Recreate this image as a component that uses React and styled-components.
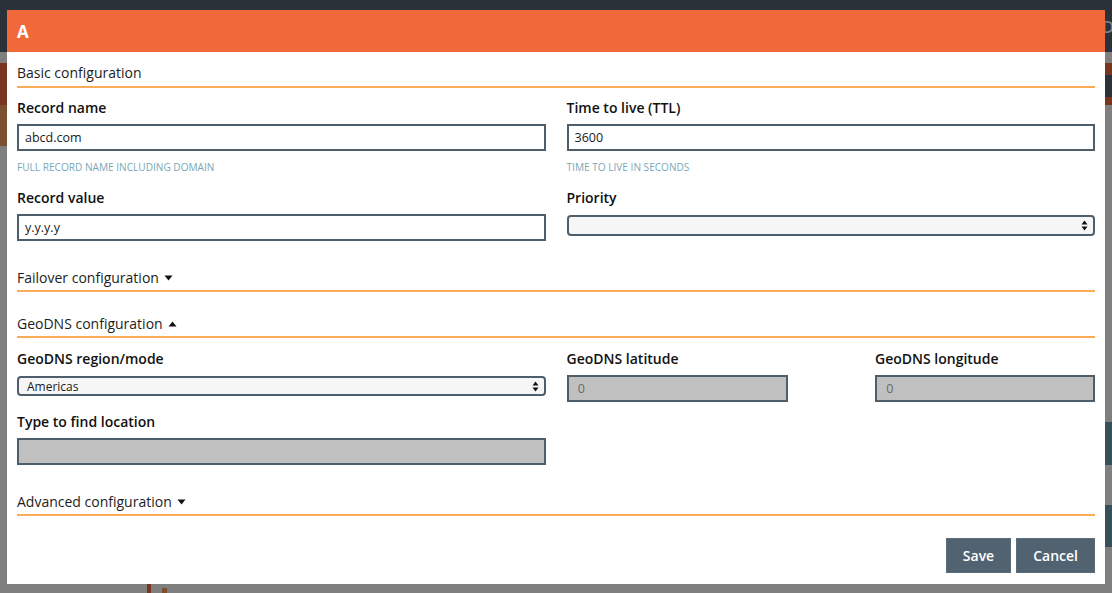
import React from "react";
import styled, { createGlobalStyle } from "styled-components";

const Global = createGlobalStyle`
  html, body { margin: 0; padding: 0; }
  body { font-family: "Open Sans", "Liberation Sans", sans-serif; }
  * { box-sizing: border-box; }
`;

const Screen = styled.div`
  position: relative;
  width: 1112px;
  height: 593px;
  overflow: hidden;
  background: #7f7f7f;
  display: flex;
  flex-direction: column;
`;

const NavBar = styled.div`
  height: 52px;
  background: #2a3139;
  display: flex;
  justify-content: flex-end;
  align-items: center;
  color: #7c838b;
  font-size: 17px;
  font-weight: 600;
`;

const NavText = styled.span`
  margin-right: -12px;
`;

const PageRow = styled.div`
  flex: 1;
  display: flex;
  justify-content: space-between;
  padding-top: 11px;
`;

const Rail = styled.div`
  width: ${(p) => p.$w}px;
  display: flex;
  flex-direction: column;
`;

const Block = styled.div`
  height: ${(p) => p.$h}px;
  margin-top: ${(p) => p.$mt || 0}px;
  background: ${(p) => p.$c};
  color: #8a9098;
  font-size: 16px;
  font-weight: 600;
  line-height: ${(p) => p.$h}px;
  padding-left: 2px;
  overflow: hidden;
`;

const ChartRow = styled.div`
  height: 9px;
  display: flex;
  align-items: flex-end;
  gap: 11px;
  padding-left: 147px;
`;

const Bar = styled.div`
  width: ${(p) => p.$w}px;
  height: ${(p) => p.$h}px;
  background: ${(p) => p.$c};
`;

const Modal = styled.div`
  position: absolute;
  left: 7px;
  top: 10px;
  width: 1098px;
  height: 574px;
  background: #fff;
  display: flex;
  flex-direction: column;
`;

const Header = styled.div`
  height: 42px;
  background: #f1693b;
  color: #fff;
  font-size: 17px;
  font-weight: 700;
  display: flex;
  align-items: center;
  padding-left: 10px;
`;

const Body = styled.div`
  padding: 11px 10px 11px 10px;
  display: flex;
  flex-direction: column;
  flex: 1;
`;

const SectionTitle = styled.div`
  margin-top: ${(p) => p.$mt || 0}px;
  font-size: 14px;
  line-height: 20px;
  color: #1d1d1d;
  padding-top: ${(p) => (p.$first ? 0 : 1)}px;
  padding-bottom: ${(p) => (p.$first ? 3 : 2)}px;
  border-bottom: 2px solid #f9ac55;
  display: flex;
  align-items: center;
  gap: 5px;
`;

const Row = styled.div`
  margin-top: ${(p) => p.$mt || 0}px;
  display: grid;
  grid-template-columns: 1fr 1fr;
  column-gap: 21px;
`;

const SubRow = styled.div`
  display: flex;
  justify-content: space-between;
`;

const Field = styled.div`
  display: flex;
  flex-direction: column;
  width: ${(p) => (p.$w ? `${p.$w}px` : "auto")};
`;

const Label = styled.div`
  font-size: 14px;
  line-height: 20px;
  padding-top: 1px;
  font-weight: 600;
  color: #111;
  margin-bottom: ${(p) => p.$mb ?? 6}px;
`;

const Input = styled.div`
  height: 27px;
  border: 2px solid #4e5e6a;
  background: ${(p) => (p.$disabled ? "#c0c0c0" : "#fff")};
  color: ${(p) => (p.$disabled ? "#6a6a6a" : "#1a1a1a")};
  font-size: 12.5px;
  display: flex;
  align-items: center;
  padding-left: 6px;
`;

const Help = styled.div`
  margin-top: 8px;
  padding-top: 1px;
  font-size: 10.1px;
  line-height: 14px;
  text-transform: uppercase;
  color: #7aa7b6;
`;

const Select = styled.div`
  height: ${(p) => p.$h}px;
  border: 2px solid #4e5e6a;
  border-radius: 4px;
  background: #f6f6f6;
  font-size: 12px;
  color: #1a1a1a;
  display: flex;
  align-items: center;
  justify-content: space-between;
  padding: 0 5px 0 8px;
`;

const Footer = styled.div`
  margin-top: auto;
  display: flex;
  justify-content: flex-end;
  gap: 5px;
`;

const Button = styled.button`
  height: 35px;
  padding: 0 ${(p) => p.$px}px;
  border: 1px solid #5c6d79;
  background: #516370;
  color: #fff;
  font-family: "Open Sans", "Liberation Sans", sans-serif;
  font-size: 14px;
  font-weight: 600;
  cursor: pointer;
`;

const Caret = ({ up }) => (
  <svg width="9" height="6" viewBox="0 0 9 6">
    {up ? <path d="M0.5 5.5 L4.5 0.5 L8.5 5.5 Z" fill="#111" /> : <path d="M0.5 0.5 L8.5 0.5 L4.5 5.5 Z" fill="#111" />}
  </svg>
);

const Arrows = () => (
  <svg width="7" height="11" viewBox="0 0 7 11">
    <path d="M3.5 0.5 L6.5 4.5 L0.5 4.5 Z" fill="#111" />
    <path d="M0.5 6.5 L6.5 6.5 L3.5 10.5 Z" fill="#111" />
  </svg>
);

export default function App() {
  return (
    <>
      <Global />
      <Screen>
        <NavBar>
          <NavText>Da</NavText>
        </NavBar>
        <PageRow>
          <Rail $w={20}>
            <Block $h={42} $c="#7a3520" />
            <Block $h={41} $c="#7a5030" />
          </Rail>
          <Rail $w={20}>
            <Block $h={12} $c="#7a3520" />
            <Block $h={22} $c="#2a3139">s</Block>
            <Block $h={8} $c="#7a3520" />
            <Block $h={43} $mt={317} $c="#36505a" />
            <Block $h={42} $mt={40} $c="#36505a" />
          </Rail>
        </PageRow>
        <ChartRow>
          <Bar $w={4} $h={9} $c="#7a3520" />
          <Bar $w={5} $h={5} $c="#7a5030" />
        </ChartRow>

        <Modal>
          <Header>A</Header>
          <Body>
            <SectionTitle $first>Basic configuration</SectionTitle>
            <Row $mt={9}>
              <Field>
                <Label>Record name</Label>
                <Input>abcd.com</Input>
                <Help>Full record name including domain</Help>
              </Field>
              <Field>
                <Label>Time to live (TTL)</Label>
                <Input>3600</Input>
                <Help>Time to live in seconds</Help>
              </Field>
            </Row>
            <Row $mt={13}>
              <Field>
                <Label>Record value</Label>
                <Input>y.y.y.y</Input>
              </Field>
              <Field>
                <Label $mb={7}>Priority</Label>
                <Select $h={21}>
                  <span />
                  <Arrows />
                </Select>
              </Field>
            </Row>

            <SectionTitle $mt={26}>
              Failover configuration <Caret />
            </SectionTitle>
            <SectionTitle $mt={21}>
              GeoDNS configuration <Caret up />
            </SectionTitle>

            <Row $mt={10}>
              <Field>
                <Label $mb={7}>GeoDNS region/mode</Label>
                <Select $h={20}>
                  <span>Americas</span>
                  <Arrows />
                </Select>
              </Field>
              <SubRow>
                <Field $w={221}>
                  <Label>GeoDNS latitude</Label>
                  <Input $disabled>&nbsp;0</Input>
                </Field>
                <Field $w={220}>
                  <Label>GeoDNS longitude</Label>
                  <Input $disabled>&nbsp;0</Input>
                </Field>
              </SubRow>
            </Row>
            <Row $mt={9}>
              <Field>
                <Label>Type to find location</Label>
                <Input $disabled />
              </Field>
            </Row>

            <SectionTitle $mt={26}>
              Advanced configuration <Caret />
            </SectionTitle>

            <Footer>
              <Button $px={16}>Save</Button>
              <Button $px={16}>Cancel</Button>
            </Footer>
          </Body>
        </Modal>
      </Screen>
    </>
  );
}
